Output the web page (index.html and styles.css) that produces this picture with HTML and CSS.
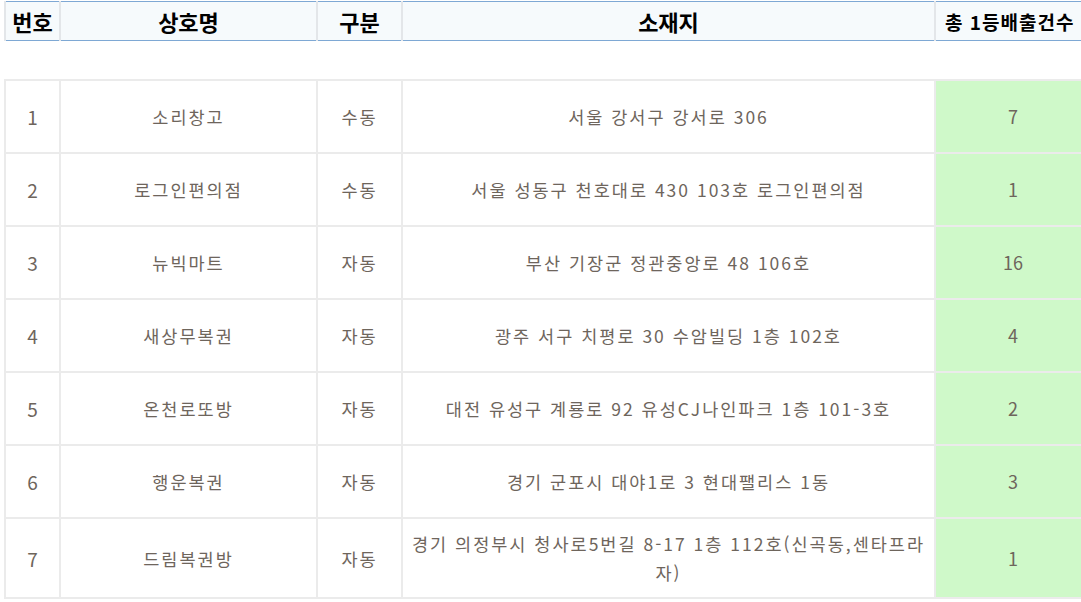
FILE: index.html
```html
<!DOCTYPE html>
<html lang="ko">
<head>
<meta charset="utf-8">
<title>1등 배출점</title>
<link rel="stylesheet" href="styles.css">
</head>
<body>
<div class="wrap">
<table class="shops">
  <colgroup>
    <col class="c-no">
    <col class="c-name">
    <col class="c-type">
    <col class="c-addr">
    <col class="c-cnt">
  </colgroup>
  <thead>
    <tr>
      <th>번호</th>
      <th>상호명</th>
      <th>구분</th>
      <th>소재지</th>
      <th class="th-small">총 1등배출건수</th>
    </tr>
  </thead>
  <tbody>
    <tr class="spacer"><td colspan="5"></td></tr>
    <tr><td>1</td><td>소리창고</td><td>수동</td><td class="addr">서울 강서구 강서로 306</td><td class="cnt">7</td></tr>
    <tr><td>2</td><td>로그인편의점</td><td>수동</td><td class="addr">서울 성동구 천호대로 430 103호 로그인편의점</td><td class="cnt">1</td></tr>
    <tr><td>3</td><td>뉴빅마트</td><td>자동</td><td class="addr">부산 기장군 정관중앙로 48 106호</td><td class="cnt">16</td></tr>
    <tr><td>4</td><td>새상무복권</td><td>자동</td><td class="addr">광주 서구 치평로 30 수암빌딩 1층 102호</td><td class="cnt">4</td></tr>
    <tr><td>5</td><td>온천로또방</td><td>자동</td><td class="addr">대전 유성구 계룡로 92 유성CJ나인파크 1층 101-3호</td><td class="cnt">2</td></tr>
    <tr><td>6</td><td>행운복권</td><td>자동</td><td class="addr">경기 군포시 대야1로 3 현대팰리스 1동</td><td class="cnt">3</td></tr>
    <tr class="last"><td>7</td><td>드림복권방</td><td>자동</td><td class="addr">경기 의정부시 청사로5번길 8-17 1층 112호(신곡동,센타프라자)</td><td class="cnt">1</td></tr>
  </tbody>
</table>
</div>
</body>
</html>
```

FILE: styles.css
```css
html, body {
  margin: 0;
  padding: 0;
  background: #ffffff;
  overflow: hidden;
}

.wrap {
  padding: 1px 0 0 4px;
  width: 1200px;
}

.shops {
  border-collapse: collapse;
  table-layout: fixed;
  width: 1086px;
  font-family: "Noto Sans CJK KR", "Noto Sans", sans-serif;
}

.c-no { width: 55px; }
.c-name { width: 257px; }
.c-type { width: 85px; }
.c-addr { width: 533px; }
.c-cnt { width: 156px; }

.shops th {
  height: 38px;
  padding: 0;
  background: #f6fafc;
  color: #000000;
  font-size: 22px;
  font-weight: 700;
  text-align: center;
  vertical-align: middle;
  border-top: 1px solid #7ea8d4;
  border-bottom: 1px solid #7ea8d4;
  border-left: 2px solid #e3e6e9;
  border-right: 2px solid #e3e6e9;
  white-space: nowrap;
  overflow: hidden;
  line-height: 1;
}

.shops th.th-small {
  font-size: 19px;
  letter-spacing: 1px;
  text-align: left;
  padding-left: 9px;
}

.shops td {
  height: 51px;
  padding: 10px 14px;
  border: 2px solid #ebebeb;
  color: #6e655c;
  font-size: 17.5px;
  font-weight: 400;
  letter-spacing: 2px;
  line-height: 29px;
  text-align: center;
  vertical-align: middle;
}

.shops td.addr {
  padding-left: 5px;
  padding-right: 5px;
}

.shops tr.spacer td {
  height: 38px;
  padding: 0;
  border-left: 0;
  border-right: 0;
  border-top: 0;
}

.shops tr.last td {
  height: auto;
}

.shops td.cnt {
  background: #cff9c9;
  letter-spacing: 0;
  font-size: 18px;
}

.shops td:first-child {
  font-size: 19px;
  letter-spacing: 0;
}
```
